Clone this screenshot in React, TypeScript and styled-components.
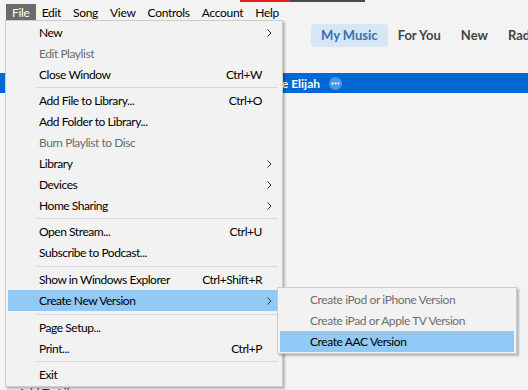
import React from 'react';
import styled, { createGlobalStyle } from 'styled-components';

const GlobalStyle = createGlobalStyle`
  html, body { margin: 0; padding: 0; }
  body {
    font-family: Lato, "Noto Sans", Arial, sans-serif;
    background: #f3f3f3;
  }
`;

type Entry =
  | { kind: 'item'; label: string; shortcut?: string; sub?: boolean; disabled?: boolean; active?: boolean }
  | { kind: 'sep'; h: number };

const fileMenu: Entry[] = [
  { kind: 'item', label: 'New', sub: true },
  { kind: 'item', label: 'Edit Playlist', disabled: true },
  { kind: 'item', label: 'Close Window', shortcut: 'Ctrl+W' },
  { kind: 'sep', h: 5 },
  { kind: 'item', label: 'Add File to Library...', shortcut: 'Ctrl+O' },
  { kind: 'item', label: 'Add Folder to Library...' },
  { kind: 'item', label: 'Burn Playlist to Disc', disabled: true },
  { kind: 'item', label: 'Library', sub: true },
  { kind: 'item', label: 'Devices', sub: true },
  { kind: 'item', label: 'Home Sharing', sub: true },
  { kind: 'sep', h: 5 },
  { kind: 'item', label: 'Open Stream...', shortcut: 'Ctrl+U' },
  { kind: 'item', label: 'Subscribe to Podcast...' },
  { kind: 'sep', h: 6 },
  { kind: 'item', label: 'Show in Windows Explorer', shortcut: 'Ctrl+Shift+R' },
  { kind: 'item', label: 'Create New Version', sub: true, active: true },
  { kind: 'sep', h: 6 },
  { kind: 'item', label: 'Page Setup...' },
  { kind: 'item', label: 'Print...', shortcut: 'Ctrl+P' },
  { kind: 'sep', h: 5 },
  { kind: 'item', label: 'Exit' },
];

const versionMenu = [
  { label: 'Create iPod or iPhone Version', disabled: true },
  { label: 'Create iPad or Apple TV Version', disabled: true },
  { label: 'Create AAC Version', active: true },
];

const menuBarItems = ['File', 'Edit', 'Song', 'View', 'Controls', 'Account', 'Help'];
const tabs = ['My Music', 'For You', 'New', 'Radio'];

const Chevron = () => (
  <svg width="5" height="8" viewBox="0 0 5 8">
    <path d="M0.5 0.5 L4 4 L0.5 7.5" fill="none" stroke="#2b2b2b" strokeWidth="1" />
  </svg>
);

const Dots = () => (
  <svg width="13" height="13" viewBox="0 0 13 13">
    <circle cx="6.5" cy="6.5" r="6.5" fill="#4d94e4" />
    <circle cx="3.6" cy="6.5" r="1.1" fill="#fff" />
    <circle cx="6.5" cy="6.5" r="1.1" fill="#fff" />
    <circle cx="9.4" cy="6.5" r="1.1" fill="#fff" />
  </svg>
);

const App: React.FC = () => {
  return (
    <Window>
      <GlobalStyle />
      <TopStrip>
        <StripRed />
        <StripDark />
      </TopStrip>
      <MenuBar>
        {menuBarItems.map((m) => (
          <BarItem key={m} $open={m === 'File'}>{m}</BarItem>
        ))}
      </MenuBar>
      <Main>
        <Tabs>
          {tabs.map((t) => (
            <Tab key={t} $selected={t === 'My Music'}>{t}</Tab>
          ))}
        </Tabs>
        <SongRow>
          <SongName>Blake Elijah</SongName>
          <Dots />
        </SongRow>
        <BottomPeek>
          <span>Add To Library</span>
        </BottomPeek>
      </Main>

      <Dropdown>
        {fileMenu.map((e, i) =>
          e.kind === 'sep' ? (
            <Separator key={i} $h={e.h} />
          ) : (
            <Row key={i} $active={e.active} $disabled={e.disabled}>
              <Label>{e.label}</Label>
              <Shortcut>{e.shortcut}</Shortcut>
              <Arrow>{e.sub && <Chevron />}</Arrow>
            </Row>
          )
        )}
      </Dropdown>

      <SubMenu>
        {versionMenu.map((v) => (
          <SubRow key={v.label} $active={v.active} $disabled={v.disabled}>
            {v.label}
          </SubRow>
        ))}
      </SubMenu>
    </Window>
  );
};

const Window = styled.div`
  position: relative;
  width: 528px;
  height: 390px;
  overflow: hidden;
  background: #f3f3f3;
  display: flex;
  flex-direction: column;
  color: #000;
`;

const TopStrip = styled.div`
  height: 2px;
  display: flex;
  padding-left: 240px;
  background: #f3f3f3;
`;

const StripRed = styled.div`
  width: 50px;
  background: #e02020;
`;

const StripDark = styled.div`
  width: 75px;
  background: #4a4a4a;
`;

const MenuBar = styled.div`
  height: 19px;
  display: flex;
  align-items: stretch;
  padding: 2px 0 0 6px;
  box-sizing: border-box;
  background: #f3f3f3;
`;

const BarItem = styled.div<{ $open?: boolean }>`
  padding: 0 6px;
  font-size: 12px;
  letter-spacing: -0.3px;
  line-height: 17px;
  color: ${(p) => (p.$open ? '#fff' : '#000')};
  background: ${(p) => (p.$open ? '#6b6b6b' : 'transparent')};
`;

const Main = styled.div`
  flex: 1;
  display: flex;
  flex-direction: column;
`;

const Tabs = styled.div`
  display: flex;
  padding: 3px 0 0 311px;
  height: 23px;
`;

const Tab = styled.div<{ $selected?: boolean }>`
  padding: 0 10px;
  border-radius: 4px;
  font-size: 13px;
  font-weight: 700;
  line-height: 23px;
  white-space: nowrap;
  color: ${(p) => (p.$selected ? '#3a6fb5' : '#444')};
  background: ${(p) => (p.$selected ? '#d6e6f5' : 'transparent')};
`;

const SongRow = styled.div`
  margin-top: 26px;
  height: 20px;
  display: flex;
  align-items: center;
  gap: 9px;
  background: #0068d6;
`;

const SongName = styled.div`
  width: 320px;
  text-align: right;
  white-space: nowrap;
  font-size: 12px;
  font-weight: 700;
  color: #fff;
`;

const BottomPeek = styled.div`
  margin-top: auto;
  height: 4px;
  overflow: hidden;
  padding-left: 18px;
  font-size: 12px;
  line-height: 13px;
  color: #333;
`;

const Dropdown = styled.div`
  position: absolute;
  left: 5px;
  top: 20px;
  width: 278px;
  box-sizing: border-box;
  padding: 1px 4px 1px 2px;
  background: #f2f2f2;
  border: 1px solid #cccccc;
  box-shadow: 2px 2px 2px rgba(0, 0, 0, 0.25);
  display: flex;
  flex-direction: column;
`;

const Row = styled.div<{ $active?: boolean; $disabled?: boolean }>`
  height: 21px;
  display: grid;
  grid-template-columns: 1fr auto 16px;
  align-items: center;
  padding-left: 31px;
  font-size: 12px;
  letter-spacing: -0.45px;
  white-space: nowrap;
  color: ${(p) => (p.$disabled ? '#6d6d6d' : '#000')};
  background: ${(p) => (p.$active ? '#91c9f7' : 'transparent')};
`;

const Label = styled.span``;

const Shortcut = styled.span`
  text-align: right;
`;

const Arrow = styled.span`
  display: flex;
  justify-content: flex-end;
  padding-right: 6px;
`;

const Separator = styled.div<{ $h: number }>`
  height: ${(p) => p.$h}px;
  display: flex;
  align-items: center;
  padding-left: 29px;
  &::after {
    content: '';
    flex: 1;
    height: 1px;
    background: #d7d7d7;
  }
`;

const SubMenu = styled.div`
  position: absolute;
  left: 277px;
  top: 287px;
  width: 240px;
  box-sizing: border-box;
  padding: 1px 2px;
  background: #f2f2f2;
  border: 1px solid #cccccc;
  box-shadow: 2px 2px 2px rgba(0, 0, 0, 0.25);
  display: flex;
  flex-direction: column;
`;

const SubRow = styled.div<{ $active?: boolean; $disabled?: boolean }>`
  height: 21px;
  line-height: 21px;
  padding-left: 30px;
  font-size: 12px;
  letter-spacing: -0.4px;
  white-space: nowrap;
  color: ${(p) => (p.$disabled ? '#6d6d6d' : '#000')};
  background: ${(p) => (p.$active ? '#91c9f7' : 'transparent')};
`;

export default App;
